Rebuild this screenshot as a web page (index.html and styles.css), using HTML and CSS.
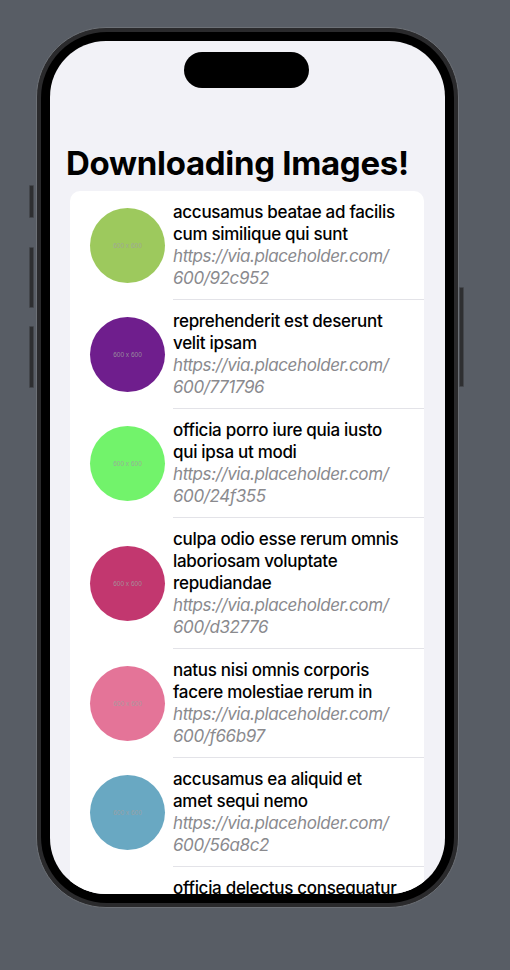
FILE: index.html
```html
<!DOCTYPE html>
<html>
<head>
<meta charset="utf-8">
<link rel="stylesheet" href="styles.css">
</head>
<body>
<div class="phone">
  <div class="btn btn-silent"></div>
  <div class="btn btn-volup"></div>
  <div class="btn btn-voldown"></div>
  <div class="btn btn-power"></div>
  <div class="bezel">
    <div class="screen">
      <div class="island"></div>
      <h1 class="title">Downloading Images!</h1>
      <div class="card">
        <div class="row">
          <div class="thumb" style="background:#9dc95d"><span>600 x 600</span></div>
          <div class="info">
            <div class="name">accusamus beatae ad facilis cum similique qui sunt</div>
            <div class="url">https://via.placeholder.com/ 600/92c952</div>
          </div>
        </div>
        <div class="row">
          <div class="thumb" style="background:#6f1e8d"><span>600 x 600</span></div>
          <div class="info">
            <div class="name">reprehenderit est deserunt velit ipsam</div>
            <div class="url">https://via.placeholder.com/ 600/771796</div>
          </div>
        </div>
        <div class="row">
          <div class="thumb" style="background:#72f36b"><span>600 x 600</span></div>
          <div class="info">
            <div class="name">officia porro iure quia iusto qui ipsa ut modi</div>
            <div class="url">https://via.placeholder.com/ 600/24f355</div>
          </div>
        </div>
        <div class="row">
          <div class="thumb" style="background:#c2376f"><span>600 x 600</span></div>
          <div class="info">
            <div class="name">culpa odio esse rerum omnis laboriosam voluptate repudiandae</div>
            <div class="url">https://via.placeholder.com/ 600/d32776</div>
          </div>
        </div>
        <div class="row">
          <div class="thumb" style="background:#e47498"><span>600 x 600</span></div>
          <div class="info">
            <div class="name">natus nisi omnis corporis facere molestiae rerum in</div>
            <div class="url">https://via.placeholder.com/ 600/f66b97</div>
          </div>
        </div>
        <div class="row">
          <div class="thumb" style="background:#69a8c2"><span>600 x 600</span></div>
          <div class="info">
            <div class="name">accusamus ea aliquid et amet sequi nemo</div>
            <div class="url">https://via.placeholder.com/ 600/56a8c2</div>
          </div>
        </div>
        <div class="row">
          <div class="thumb" style="background:#b0f7cc"><span>600 x 600</span></div>
          <div class="info">
            <div class="name">officia delectus consequatur vero aut veniam explicabo molestias</div>
            <div class="url">https://via.placeholder.com/ 600/b0f7cc</div>
          </div>
        </div>
      </div>
    </div>
  </div>
</div>
</body>
</html>
```
FILE: styles.css
```css
html, body {
  margin: 0;
  padding: 0;
}
body {
  background: #585d65;
  width: 510px;
  height: 970px;
  overflow: hidden;
  font-family: Inter, "Noto Sans", sans-serif;
}
.phone {
  position: relative;
  margin: 27px 0 0 36px;
  width: 423px;
  height: 881px;
  box-sizing: border-box;
  border-radius: 70px;
  background: #2a2a2c;
  border: 1px solid #6c7076;
  padding: 4px;
}
.btn {
  position: absolute;
  width: 5px;
  background: #2e2f31;
  border: 1px solid #44474c;
  box-sizing: border-box;
  border-radius: 1px;
}
.btn-silent { left: -8px; top: 157px; height: 33px; }
.btn-volup { left: -8px; top: 219px; height: 61px; }
.btn-voldown { left: -8px; top: 298px; height: 62px; }
.btn-power { right: -6px; top: 259px; height: 100px; }
.bezel {
  height: 100%;
  box-sizing: border-box;
  border-radius: 66px;
  background: #000;
  padding: 9px;
}
.screen {
  position: relative;
  height: 100%;
  border-radius: 56px;
  background: #f2f2f7;
  overflow: hidden;
}
.island {
  position: absolute;
  left: 134px;
  top: 11px;
  width: 125px;
  height: 36px;
  border-radius: 18px;
  background: #000;
}
.title {
  margin: 0;
  padding: 102px 0 0 16px;
  font-size: 33px;
  line-height: 40px;
  font-weight: 700;
  color: #000;
  letter-spacing: -0.3px;
}
.card {
  margin: 8px 21px 0 20px;
  background: #fff;
  border-radius: 10px;
}
.row {
  display: flex;
  align-items: center;
}
.thumb {
  flex: 0 0 75px;
  height: 75px;
  border-radius: 50%;
  margin: 0 8px 0 20px;
  display: flex;
  align-items: center;
  justify-content: center;
}
.thumb span {
  font-size: 6.5px;
  color: rgba(160, 160, 160, 0.85);
  font-family: "Liberation Sans", sans-serif;
}
.info {
  flex: 1;
  padding: 10px 22px 10px 0;
  border-bottom: 1px solid #e3e3e8;
  font-size: 17px;
  line-height: 22px;
}
.name {
  font-weight: 500;
  color: #000;
  letter-spacing: -0.3px;
}
.url {
  font-style: italic;
  color: #8a8a8e;
  letter-spacing: -0.4px;
}
```
